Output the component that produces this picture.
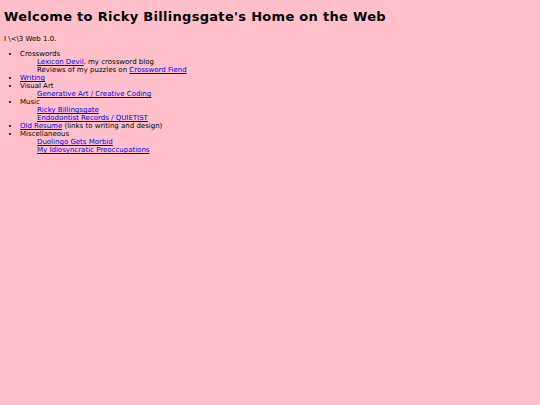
const link = 'text-[#0000ee] underline';

export default function App() {
  return (
    <div className="min-h-screen bg-[#ffc0cb] px-[4px] pt-[8px] text-black font-['DejaVu_Sans',sans-serif]">
      <h1 className="text-[13px] font-bold leading-[17px] tracking-[0.3px]">Welcome to Ricky Billingsgate's Home on the Web</h1>
      <p className="mt-[10px] text-[7px] leading-[8px]">I \&lt;\3 Web 1.0.</p>
      <ul className="mt-[7px] list-disc pl-[16px] text-[7px] leading-[8px]">
        <li>
          Crosswords
          <ul className="list-none pl-[17px]">
            <li>
              <a href="#" className={link}>Lexicon Devil</a>, my crossword blog
            </li>
            <li>
              Reviews of my puzzles on <a href="#" className={link}>Crossword Fiend</a>
            </li>
          </ul>
        </li>
        <li>
          <a href="#" className={link}>Writing</a>
        </li>
        <li>
          Visual Art
          <ul className="list-none pl-[17px]">
            <li>
              <a href="#" className={link}>Generative Art / Creative Coding</a>
            </li>
          </ul>
        </li>
        <li>
          Music
          <ul className="list-none pl-[17px]">
            <li>
              <a href="#" className={link}>Ricky Billingsgate</a>
            </li>
            <li>
              <a href="#" className={link}>Endodontist Records / QUIETIST</a>
            </li>
          </ul>
        </li>
        <li>
          <a href="#" className={link}>Old Resume</a> (links to writing and design)
        </li>
        <li>
          Miscellaneous
          <ul className="list-none pl-[17px]">
            <li>
              <a href="#" className={link}>Duolingo Gets Morbid</a>
            </li>
            <li>
              <a href="#" className={link}>My Idiosyncratic Preoccupations</a>
            </li>
          </ul>
        </li>
      </ul>
    </div>
  );
}
